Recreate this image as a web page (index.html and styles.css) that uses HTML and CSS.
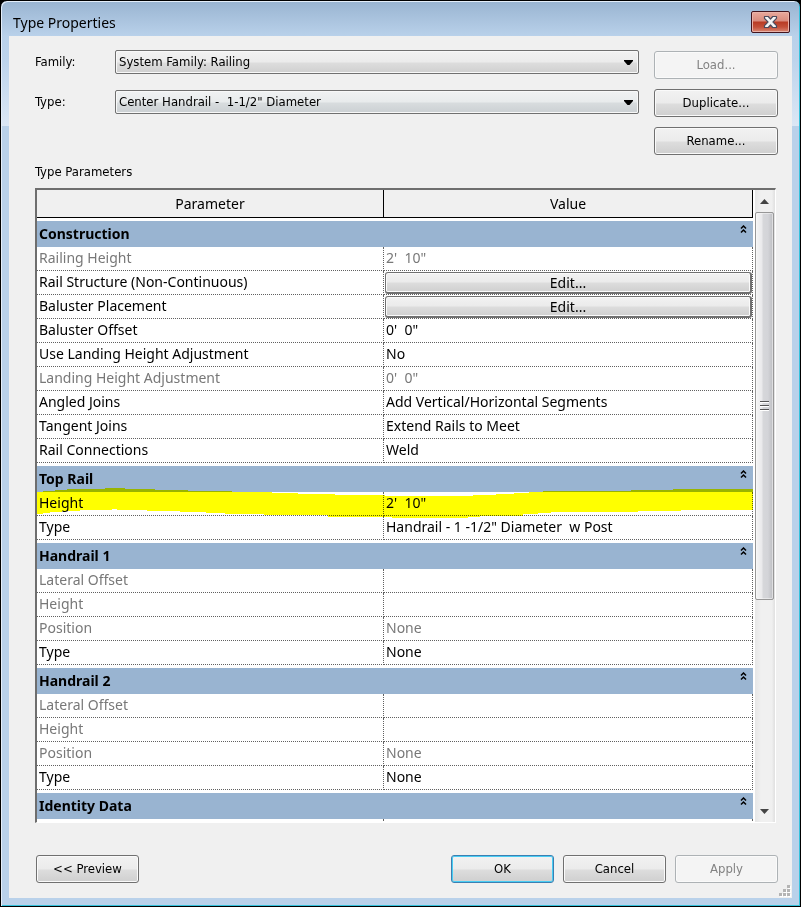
FILE: index.html
```html
<!DOCTYPE html>
<html lang="en">
<head>
<meta charset="utf-8">
<title>Type Properties</title>
<link rel="stylesheet" href="styles.css">
</head>
<body>
<svg width="0" height="0" class="defs" aria-hidden="true">
  <symbol id="chevrons" viewBox="0 0 7 9"><path d="M1 3.5 3.5 1 6 3.5M1 7.5 3.5 5 6 7.5" fill="none" stroke="#000" stroke-width="1.5"/></symbol>
  <symbol id="caret" viewBox="0 0 9 5"><path d="M0 0h9v1L5.5 5h-2L0 1z"/></symbol>
</svg>
<main class="window">
  <header class="titlebar">
    <h1 class="title">Type Properties</h1>
    <button class="close" type="button" aria-label="Close">
      <svg width="15" height="14" viewBox="0 0 15 14"><path d="M1.5 1.5h3.8l2.2 2.6 2.2-2.6h3.8v1.8L10 7l3.5 3.7v1.8H9.700L7.500 9.900 5.300 12.500H1.500v-1.800L5 7 1.500 3.300z" fill="#f4f4f4" stroke="#4b4a5c" stroke-width="1.200" stroke-linejoin="round"/></svg>
    </button>
  </header>
  <form class="client">
    <section class="selectors">
      <div class="fields">
        <label for="family">Family:</label>
        <span class="combo"><select id="family"><option>System Family: Railing</option></select><svg class="arrow"><use href="#caret"/></svg></span>
        <label for="type">Type:</label>
        <span class="combo cool"><select id="type"><option>Center Handrail -&nbsp; 1-1/2" Diameter</option></select><svg class="arrow"><use href="#caret"/></svg></span>
      </div>
      <div class="actions">
        <button class="btn" type="button" disabled>Load...</button>
        <button class="btn" type="button">Duplicate...</button>
        <button class="btn" type="button">Rename...</button>
      </div>
    </section>
    <h2 class="caption" id="params-title">Type Parameters</h2>
    <section class="grid-frame">
      <div class="viewport">
        <table class="params" aria-labelledby="params-title">
          <colgroup><col class="col-name"><col></colgroup>
          <thead><tr><th>Parameter</th><th>Value</th></tr></thead>
          <tbody>
            <tr class="group"><th colspan="2"><div class="band">Construction<button class="fold" type="button" aria-label="Collapse"><svg><use href="#chevrons"/></svg></button></div></th></tr>
            <tr class="off"><td>Railing Height</td><td>2'&nbsp; 10"</td></tr>
            <tr><td>Rail Structure (Non-Continuous)</td><td class="action"><button class="edit" type="button">Edit...</button></td></tr>
            <tr><td>Baluster Placement</td><td class="action"><button class="edit" type="button">Edit...</button></td></tr>
            <tr><td>Baluster Offset</td><td>0'&nbsp; 0"</td></tr>
            <tr><td>Use Landing Height Adjustment</td><td>No</td></tr>
            <tr class="off"><td>Landing Height Adjustment</td><td>0'&nbsp; 0"</td></tr>
            <tr><td>Angled Joins</td><td>Add Vertical/Horizontal Segments</td></tr>
            <tr><td>Tangent Joins</td><td>Extend Rails to Meet</td></tr>
            <tr><td>Rail Connections</td><td>Weld</td></tr>
          </tbody>
          <tbody>
            <tr class="group"><th colspan="2"><div class="band">Top Rail<button class="fold" type="button" aria-label="Collapse"><svg><use href="#chevrons"/></svg></button></div></th></tr>
            <tr class="marked"><td>Height<svg class="marker" viewBox="0 0 715 30" preserveAspectRatio="none" shape-rendering="crispEdges"><path fill="#ff0" d="M0 4H6V3H18V2H30V1H68V0H88V1H118V2H151V3H195V4H235V5H261V6H298V7H348V8H435V7H458V6H476V5H491V4H505V3H593V2H635V1H715V22H643V23H600V24H513V25H500V26H485V28H442V29H430V30H355V29H291V27H227V26H188V25H169V24H143V23H110V22H80V21H75V22H43V23H25V24H13V25H6V26H0z"/></svg></td><td>2'&nbsp; 10"</td></tr>
            <tr><td>Type</td><td>Handrail - 1 -1/2" Diameter&nbsp; w Post</td></tr>
          </tbody>
          <tbody>
            <tr class="group"><th colspan="2"><div class="band">Handrail 1<button class="fold" type="button" aria-label="Collapse"><svg><use href="#chevrons"/></svg></button></div></th></tr>
            <tr class="off"><td>Lateral Offset</td><td></td></tr>
            <tr class="off"><td>Height</td><td></td></tr>
            <tr class="off"><td>Position</td><td>None</td></tr>
            <tr><td>Type</td><td>None</td></tr>
          </tbody>
          <tbody>
            <tr class="group"><th colspan="2"><div class="band">Handrail 2<button class="fold" type="button" aria-label="Collapse"><svg><use href="#chevrons"/></svg></button></div></th></tr>
            <tr class="off"><td>Lateral Offset</td><td></td></tr>
            <tr class="off"><td>Height</td><td></td></tr>
            <tr class="off"><td>Position</td><td>None</td></tr>
            <tr><td>Type</td><td>None</td></tr>
          </tbody>
          <tbody>
            <tr class="group"><th colspan="2"><div class="band">Identity Data<button class="fold" type="button" aria-label="Collapse"><svg><use href="#chevrons"/></svg></button></div></th></tr>
            <tr><td></td><td></td></tr>
          </tbody>
        </table>
      </div>
      <div class="scrollbar">
        <button class="step" type="button" aria-label="Scroll up"><svg width="9" height="5" viewBox="0 0 9 5"><path d="M0 5 4.500 0 9 5z" fill="#444"/></svg></button>
        <div class="track"><div class="thumb"><span class="grip"></span></div></div>
        <button class="step" type="button" aria-label="Scroll down"><svg width="9" height="5" viewBox="0 0 9 5"><path d="M0 0h9L4.500 5z" fill="#444"/></svg></button>
      </div>
    </section>
    <footer class="footer">
      <button class="btn preview" type="button">&lt;&lt; Preview</button>
      <button class="btn primary" type="submit">OK</button>
      <button class="btn" type="button">Cancel</button>
      <button class="btn" type="button" disabled>Apply</button>
      <svg class="sizer" width="12" height="12" viewBox="0 0 12 12"><path fill="#fff" d="M9 1h3v3H9zM5 5h3v3H5zM9 5h3v3H9zM1 9h3v3H1zM5 9h3v3H5zM9 9h3v3H9z"/><path fill="#b4b4b4" d="M8 0h3v3H8zM4 4h3v3H4zM8 4h3v3H8zM0 8h3v3H0zM4 8h3v3H4zM8 8h3v3H8z"/></svg>
    </footer>
  </form>
</main>
</body>
</html>
```
FILE: styles.css
```css
* { box-sizing: border-box; }

body {
  margin: 0;
  background: #000;
  color: #000;
  font: 13px/18px "DejaVu Sans Condensed", "Noto Sans", sans-serif;
}

button, select { font: inherit; color: inherit; }

.defs { position: absolute; }

.window {
  display: flex;
  flex-direction: column;
  height: 100vh;
  padding: 0 8px 8px;
  border: 1px solid #000;
  border-radius: 7px 7px 0 0;
  background:
    linear-gradient(#99b4d1, #b9d1ea 35px, #bdd4ec 60px, #dbe7f5 125px, #b9d1ea 125px);
  box-shadow: inset 1px 1px #e4eefa, inset -1px -1px #35c2dc;
}

.titlebar {
  display: flex;
  align-items: flex-start;
  justify-content: space-between;
  flex: none;
  height: 35px;
  padding: 10px 2px 0 4px;
}

.title {
  margin: 0;
  font: 400 14px/24px "Noto Sans", "Open Sans", sans-serif;
}

.close {
  display: flex;
  align-items: center;
  justify-content: center;
  width: 39px;
  height: 22px;
  padding: 0;
  border: 1px solid #43141d;
  border-radius: 2px;
  background: linear-gradient(#e9a99c, #d98b7d 9px, #b83b24 10px, #c4503a 15px, #d98874);
  box-shadow: inset 0 0 0 1px #e9b2a8;
}

.client {
  display: flex;
  flex-direction: column;
  flex: 1;
  min-height: 0;
  padding: 14px 14px 15px 26px;
  background: #f0f0f0;
}

.selectors { display: flex; gap: 15px; }

.fields {
  display: grid;
  grid-template-columns: 80px 1fr;
  grid-auto-rows: 24px;
  row-gap: 16px;
  flex: 1;
  align-items: center;
}

.combo { position: relative; display: flex; }

.combo select {
  appearance: none;
  width: 100%;
  height: 24px;
  padding: 0 24px 0 3px;
  border: 1px solid #707070;
  border-radius: 2px;
  background: linear-gradient(#f2f2f2, #ebebeb 11px, #dddddd 12px, #cfcfcf);
  box-shadow: inset 0 0 0 1px #f8f8f8;
}

.combo.cool select { background: linear-gradient(#f0f2f3, #e8ebec 11px, #d8dcde 12px, #cbd0d3); }

.arrow {
  position: absolute;
  top: 10px;
  right: 6px;
  width: 9px;
  height: 5px;
  pointer-events: none;
}

.actions {
  display: flex;
  flex-direction: column;
  gap: 10px;
  width: 124px;
  padding-top: 1px;
}

.btn {
  height: 28px;
  padding: 0;
  border: 1px solid #707070;
  border-radius: 3px;
  background: linear-gradient(#f2f2f2, #ebebeb 13px, #dddddd 14px, #cfcfcf);
  box-shadow: inset 0 0 0 1px #fafafa;
}

.btn:disabled {
  border-color: #adb2b5;
  background: #f4f4f4;
  color: #838383;
}

.btn.primary {
  border-color: #3c7fb1;
  box-shadow: inset 0 0 0 1px #48cdf4;
}

.caption {
  margin: 8px 0 7px;
  font-size: 13px;
  font-weight: 400;
}

.grid-frame {
  display: flex;
  flex: 1;
  min-height: 0;
  margin-right: 2px;
  border: 2px solid;
  border-color: #6e6e6e #fff #fff #6e6e6e;
  border-right-width: 1px;
  border-bottom-width: 1px;
  background: #fff;
}

.viewport { flex: 1; overflow: hidden; }

.params {
  width: 100%;
  border-spacing: 0;
  table-layout: fixed;
  font: 14px/20px "Noto Sans", "Open Sans", sans-serif;
}

.col-name { width: 347px; }

.params thead th {
  height: 28px;
  padding: 0;
  border-right: 1px solid #000;
  border-bottom: 1px solid #000;
  background: #f0f0f0;
  font-weight: 400;
}

.params td {
  height: 24px;
  padding: 0 2px 2px;
  border-right: 1px dotted #606060;
  border-bottom: 1px dotted #606060;
  white-space: nowrap;
}

.params .off td { color: #787878; }

.params .group th { padding: 3px 0 0; text-align: left; }

.band {
  display: flex;
  align-items: center;
  justify-content: space-between;
  height: 26px;
  padding: 0 6px 0 2px;
  background: #99b4d1;
  font-weight: 700;
}

.fold {
  display: flex;
  height: 18px;
  padding: 0;
  border: 0;
  background: none;
}

.fold svg { width: 7px; height: 9px; }

.params .action { padding: 1px 0 0 1px; }

.edit {
  display: block;
  width: 100%;
  height: 22px;
  padding: 0;
  border: 1px solid #707070;
  border-right-width: 2px;
  border-bottom-width: 2px;
  border-radius: 3px;
  background: linear-gradient(#f2f2f2, #ebebeb 9px, #dddddd 10px, #cfcfcf);
  box-shadow: inset 0 0 0 1px #fafafa;
  line-height: 18px;
}

.marked { position: relative; }

.marker {
  position: absolute;
  top: -4px;
  left: 0;
  width: 100%;
  height: 30px;
  mix-blend-mode: multiply;
  pointer-events: none;
}

.scrollbar {
  display: flex;
  flex-direction: column;
  width: 22px;
  padding: 0 1px 0 2px;
  background: linear-gradient(90deg, #fff 2px, #e6e6e6 2px, #f0f0f0 8px, #f0f0f0 19px, #e3e3e3 21px);
}

.step {
  display: flex;
  align-items: center;
  justify-content: center;
  flex: none;
  height: 22px;
  padding: 0;
  border: 0;
  background: none;
}

.track { flex: 1; }

.thumb {
  display: flex;
  align-items: center;
  justify-content: center;
  height: 66%;
  border: 1px solid #979797;
  border-radius: 2px;
  background: linear-gradient(90deg, #f5f5f5, #e9e9eb 6px, #d6d7da 7px, #d3d4d8 12px, #bcbdc1);
  box-shadow: inset 0 0 0 1px #fafafa88;
}

.grip {
  width: 9px;
  height: 10px;
  background: repeating-linear-gradient(#555 0 1px, #fff 1px 2px, transparent 2px 4px);
}

.footer {
  position: relative;
  display: flex;
  gap: 9px;
  flex: none;
  margin-top: 32px;
  padding-left: 1px;
}

.footer .btn { width: 103px; }

.footer .preview { margin-right: auto; }

.sizer {
  position: absolute;
  right: -13px;
  bottom: -14px;
}
```
